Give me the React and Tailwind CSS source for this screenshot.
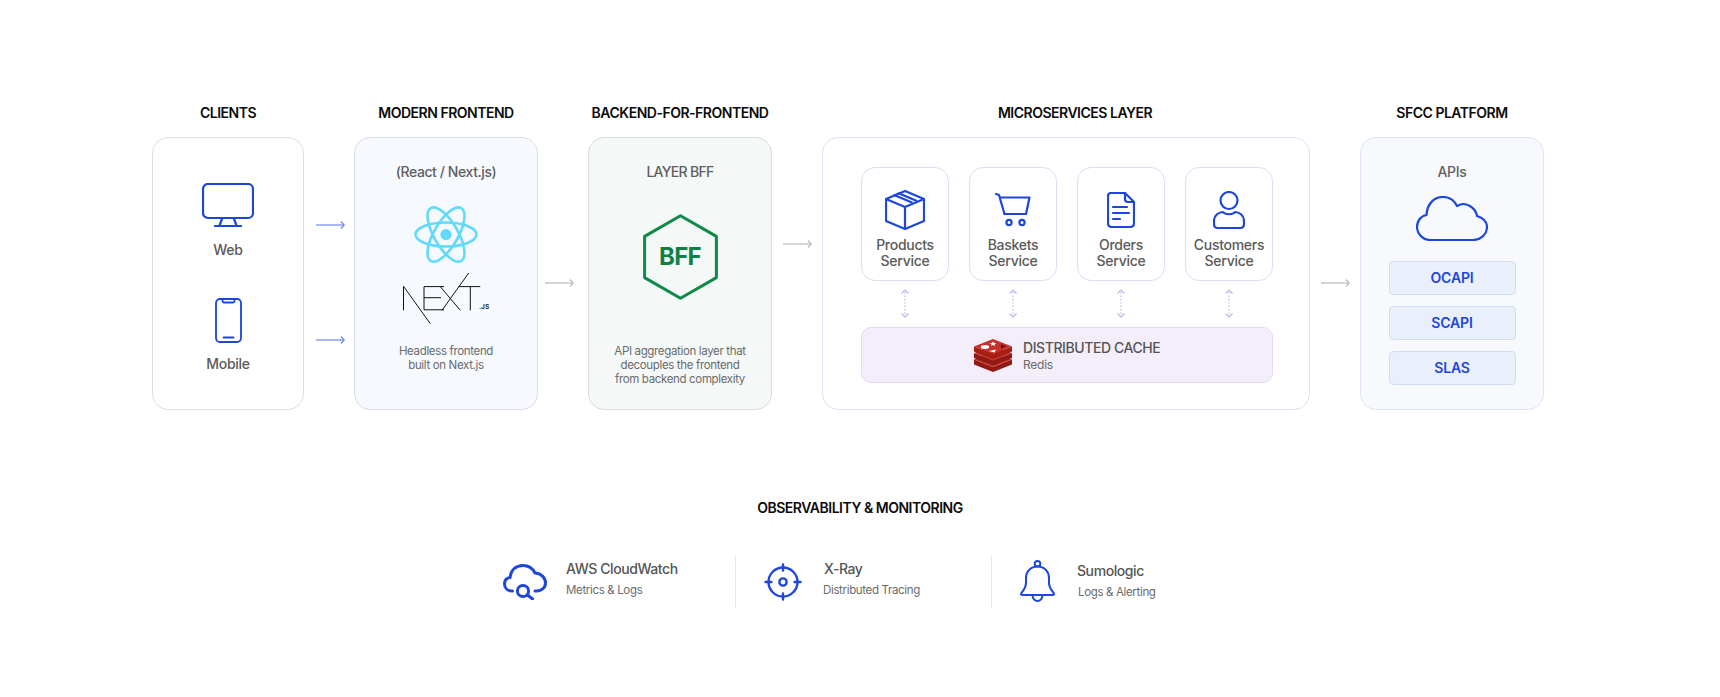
const BLUE = '#1d46dc';

const Arrow = ({ color = '#b9b9b9', w = 29 }) => (
  <svg width={w} height="10" viewBox={`0 0 ${w} 10`} fill="none" stroke={color} strokeWidth="1.2">
    <path d={`M0 5H${w - 1}`} />
    <path d={`M${w - 4} 1.5L${w - 0.8} 5L${w - 4} 8.5`} />
  </svg>
);

const DottedArrow = () => (
  <svg width="10" height="29" viewBox="0 0 10 29" fill="none" stroke="#c4aeea" strokeWidth="1.1">
    <path d="M1.5 4.5L5 1L8.5 4.5" />
    <path d="M5 3V26" strokeDasharray="1.6 1.8" />
    <path d="M1.5 24.5L5 28L8.5 24.5" />
  </svg>
);

const MonitorIcon = () => (
  <svg width="52" height="44" viewBox="0 0 52 44" fill="none" stroke={BLUE} strokeWidth="2.2" strokeLinecap="round">
    <rect x="1" y="1" width="50" height="34" rx="5" />
    <path d="M20 36L17.5 42.5M32 36L34.5 42.5M13 43H39" />
  </svg>
);

const MobileIcon = () => (
  <svg width="27" height="45" viewBox="0 0 27 45" fill="none" stroke={BLUE} strokeWidth="1.8" strokeLinecap="round">
    <rect x="1" y="1" width="25" height="43" rx="4" />
    <path d="M7.5 1V3Q7.5 4.5 9 4.5H18Q19.5 4.5 19.5 3V1" />
    <path d="M8.5 39.5H18.5" />
  </svg>
);

const ReactLogo = () => (
  <svg width="64" height="57" viewBox="-32 -28.5 64 57" fill="none" stroke="#61dafb" strokeWidth="2.6">
    <ellipse rx="30.5" ry="12" />
    <ellipse rx="30.5" ry="12" transform="rotate(60)" />
    <ellipse rx="30.5" ry="12" transform="rotate(120)" />
    <circle r="5.6" fill="#61dafb" stroke="none" />
  </svg>
);

const NextLogo = () => (
  <svg width="87" height="51" viewBox="0 0 87 51" fill="none" stroke="#111" strokeWidth="1">
    <path d="M0.5 37.3V13.3L27.3 50.7" />
    <path d="M21 36.8V13.6H41M21 24.7H38M21 36.8H41" />
    <path d="M37 13.3L57.3 37.3M65.7 0L39 37.3" />
    <path d="M55.7 13.6H77.3M67.3 13.6V37.3" />
    <text x="76" y="36" fontSize="6.6" fontWeight="600" fill="#111" stroke="none" fontFamily="Inter, sans-serif">.JS</text>
  </svg>
);

const Hexagon = () => (
  <svg width="75" height="86" viewBox="0 0 75 86" fill="none" stroke="#0f8a4b" strokeWidth="3" strokeLinejoin="round">
    <path d="M37.5 1.8L73.4 22.4V63.6L37.5 84.2L1.6 63.6V22.4Z" />
  </svg>
);

const BoxIcon = () => (
  <svg width="40" height="40" viewBox="0 0 40 40" fill="none" stroke={BLUE} strokeWidth="2.2" strokeLinejoin="round">
    <path d="M20 1L39 9V31L20 39L1 31V9Z" />
    <path d="M1 9L20 17L39 9M20 17V39" />
    <path d="M8.5 4.8L27.5 12.8M13 3L32 11" />
  </svg>
);

const CartIcon = () => (
  <svg width="36" height="34" viewBox="0 0 36 34" fill="none" stroke={BLUE} strokeWidth="2.2" strokeLinecap="round" strokeLinejoin="round">
    <path d="M1 1L4 2L9.5 21" />
    <path d="M5 4.5H34.5L31 21H9.5" />
    <circle cx="14" cy="29.5" r="2.6" />
    <circle cx="27" cy="29.5" r="2.6" />
  </svg>
);

const DocIcon = () => (
  <svg width="28" height="36" viewBox="0 0 28 36" fill="none" stroke={BLUE} strokeWidth="2.2" strokeLinecap="round" strokeLinejoin="round">
    <path d="M4 1H18L27 10V31Q27 35 23 35H5Q1 35 1 31V4Q1 1 4 1Z" />
    <path d="M18 1V7Q18 10 21 10H27" />
    <path d="M6 15H20M6 21H22M6 27H13" />
  </svg>
);

const UserIcon = () => (
  <svg width="32" height="38" viewBox="0 0 32 38" fill="none" stroke={BLUE} strokeWidth="2.2" strokeLinejoin="round">
    <circle cx="16" cy="9.5" r="8.5" />
    <path d="M10 21C6 21 1 24 1 30V33Q1 37 5 37H27Q31 37 31 33V30C31 24 26 21 22 21C20 24 12 24 10 21Z" />
  </svg>
);

const RedisLogo = () => {
  const layer = (o, top, side) => (
    <g key={o}>
      <path d={`M0 ${7.5 + o}L19 ${15 + o}L38 ${7.5 + o}V${12.5 + o}L19 ${20 + o}L0 ${12.5 + o}Z`} fill={side} />
      <path d={`M19 ${o}L38 ${7.5 + o}L19 ${15 + o}L0 ${7.5 + o}Z`} fill={top} />
    </g>
  );
  return (
    <svg width="38" height="33" viewBox="0 0 38 33">
      {layer(13, '#c6302b', '#8e1a13')}
      {layer(6.5, '#c6302b', '#8e1a13')}
      {layer(0, '#c6302b', '#a41e11')}
      <path d="M19 2.5L20 4L22.5 4.5L20.5 5.5L21 7L19 6L17 6.8L17.5 5.3L15.5 4.5L18 4Z" fill="#fff" />
      <ellipse cx="11" cy="8" rx="4.2" ry="1.9" fill="#fff" />
      <path d="M15 12L22 10.5L20.5 13.5Z" fill="#fff" />
      <path d="M27 5.2L32 7.5L27 9.5Z" fill="#5e1410" />
    </svg>
  );
};

const CloudIcon = () => (
  <svg width="72" height="45" viewBox="0 0 72 45" fill="none" stroke={BLUE} strokeWidth="2.2" strokeLinejoin="round">
    <path d="M14 44H57C65 44 71 38 71 31C71 26 67 22 61 20C60 13 53 8 47 8C45 8 43 9 41 10C38 4 33 1 27 1C18 1 11 8 10.5 19C4 20 1 26 1 31C1 38 7 44 14 44Z" />
  </svg>
);

const CloudSearchIcon = () => (
  <svg width="44" height="36" viewBox="0 0 44 36" fill="none" stroke={BLUE} strokeWidth="3" strokeLinecap="round">
    <path d="M9.5 27H9C4.5 27 1.5 24 1.5 20C1.5 16 4 14 7 13.5C8 6 13 1.5 20 1.5C26 1.5 30 5 32 9C38 9 42.5 14 42.5 19C42.5 24 38 27 34 27H32" />
    <circle cx="20" cy="27" r="5.6" />
    <path d="M24.5 31L29.5 35" />
  </svg>
);

const TargetIcon = () => (
  <svg width="38" height="38" viewBox="0 0 38 38" fill="none" stroke={BLUE} strokeWidth="2.4" strokeLinecap="round">
    <circle cx="19" cy="19" r="14.5" />
    <circle cx="19" cy="19" r="3.6" />
    <path d="M19 1.5V7.5M19 30.5V36.5M1.5 19H7.5M30.5 19H36.5" />
  </svg>
);

const BellIcon = () => (
  <svg width="35" height="42" viewBox="0 0 35 42" fill="none" stroke={BLUE} strokeWidth="2" strokeLinejoin="round" className="mb-[3px]">
    <circle cx="17.5" cy="3.8" r="2.8" />
    <path d="M17.5 6.6C10.5 6.6 6 11.5 6 18V23C6 28 3 30.5 1.3 33.2Q0.4 35 2.5 35H32.5Q34.6 35 33.7 33.2C32 30.5 29 28 29 23V18C29 11.5 24.5 6.6 17.5 6.6Z" />
    <path d="M12.5 35C12.5 38.5 14.8 41 17.5 41C20.2 41 22.5 38.5 22.5 35" />
  </svg>
);

const Column = ({ title, width, headingClass = '', children }) => (
  <div className={`shrink-0 ${width}`}>
    <h2 className={`h-5 mb-[14px] text-center text-[14px] leading-5 font-semibold tracking-[-0.035em] text-[#0b0b0b] whitespace-nowrap ${headingClass}`}>
      {title}
    </h2>
    {children}
  </div>
);

// the 50px strip between two columns, arrows sit at their own heights
const Gap = ({ children, className }) => (
  <div className={`w-[50px] shrink-0 flex flex-col items-center ${className}`}>{children}</div>
);

const services = [
  { name: 'Products', icon: <BoxIcon />, top: 'pt-[22px]' },
  { name: 'Baskets', icon: <CartIcon />, top: 'pt-[25px]' },
  { name: 'Orders', icon: <DocIcon />, top: 'pt-[24px]' },
  { name: 'Customers', icon: <UserIcon />, top: 'pt-[23px]' }
];

const ServiceCard = ({ service }) => (
  <div className="w-[88px] h-[114px] shrink-0 rounded-[14px] border border-[#e4daf6] bg-white flex flex-col items-center">
    <div className={`h-[69px] ${service.top}`}>{service.icon}</div>
    <p className="text-[14px] leading-4 font-medium tracking-[-0.02em] text-[#5a5a5a] text-center">
      {service.name}
      <br />
      Service
    </p>
  </div>
);

const monitors = [
  { name: 'AWS CloudWatch', sub: 'Metrics & Logs', icon: <CloudSearchIcon />, box: 'w-[235px] pl-[3px] gap-[19px]', nameClass: '', subClass: '', textPad: 'pb-[6px]' },
  { name: 'X-Ray', sub: 'Distributed Tracing', icon: <TargetIcon />, box: 'w-[256px] pl-[28px] gap-[21px]', nameClass: 'pl-px', subClass: '', textPad: 'pb-[6px]' },
  { name: 'Sumologic', sub: 'Logs & Alerting', icon: <BellIcon />, box: 'w-[200px] pl-[28px] gap-[22px]', nameClass: '', subClass: 'pl-px', textPad: 'pb-[2px]' }
];

export default function App() {
  return (
    <div className="min-h-[697px] bg-white font-['Inter',sans-serif]">
      <div className="pt-[103px] pl-[152px] flex items-start">
        <Column title="CLIENTS" width="w-[152px]">
          <div className="h-[273px] rounded-[16px] border border-[#dfdfe2] bg-white flex flex-col items-center pt-[45px]">
            <MonitorIcon />
            <p className="mt-[13px] text-[14px] leading-5 font-medium tracking-[-0.02em] text-[#5a5a5a]">Web</p>
            <div className="mt-[38px]"><MobileIcon /></div>
            <p className="mt-[11px] text-[14px] leading-5 font-medium tracking-[-0.02em] text-[#5a5a5a]">Mobile</p>
          </div>
        </Column>

        <Gap className="pt-[117px] pl-[2px]">
          <Arrow color="#6f88ee" />
          <div className="mt-[105px]"><Arrow color="#6f88ee" /></div>
        </Gap>

        <Column title="MODERN FRONTEND" width="w-[184px]">
          <div className="h-[273px] rounded-[16px] border border-[#d8dde6] bg-[#f6f9fe] flex flex-col items-center pt-[24px]">
            <p className="text-[14px] leading-5 font-medium tracking-[-0.03em] text-[#5f5f5f]">(React / Next.js)</p>
            <div className="mt-[24px]"><ReactLogo /></div>
            <div className="mt-[10px] ml-px"><NextLogo /></div>
            <p className="mt-[20px] text-[11.5px] leading-[14px] tracking-[-0.03em] text-[#6b6b6b] text-center">
              Headless frontend
              <br />
              built on Next.js
            </p>
          </div>
        </Column>

        <Gap className="pt-[175px] pr-[7px]">
          <Arrow />
        </Gap>

        <Column title="BACKEND-FOR-FRONTEND" width="w-[184px]">
          <div className="h-[273px] rounded-[16px] border border-[#d8dedb] bg-[#f4f8f6] flex flex-col items-center pt-[24px]">
            <p className="text-[14px] leading-5 font-medium tracking-[-0.05em] text-[#5f5f5f]">LAYER BFF</p>
            <div className="mt-[32px] relative">
              <Hexagon />
              <span className="absolute inset-0 flex items-center justify-center text-[24px] font-bold tracking-[-0.03em] text-[#0e8145]">BFF</span>
            </div>
            <p className="mt-[44px] text-[11.5px] leading-[14px] tracking-[-0.03em] text-[#6b6b6b] text-center">
              API aggregation layer that
              <br />
              decouples the frontend
              <br />
              from backend complexity
            </p>
          </div>
        </Column>

        <Gap className="pt-[136px]">
          <Arrow />
        </Gap>

        <Column title="MICROSERVICES LAYER" width="w-[488px]" headingClass="pl-[18px]">
          <div className="h-[273px] rounded-[16px] border border-[#e5dcf6] bg-white pt-[29px] pl-[38px] pr-[36px]">
            <div className="flex gap-[20px]">
              {services.map((service) => (
                <ServiceCard key={service.name} service={service} />
              ))}
            </div>
            <div className="flex gap-[20px] h-[46px] pt-[8px]">
              {services.map((service) => (
                <div key={service.name} className="w-[88px] flex justify-center"><DottedArrow /></div>
              ))}
            </div>
            <div className="h-[56px] rounded-[10px] border border-[#e4daf6] bg-[#f3eefa] flex items-center pl-[112px] gap-[11px]">
              <RedisLogo />
              <div>
                <p className="text-[14px] leading-[18px] font-medium tracking-[-0.03em] text-[#555]">DISTRIBUTED CACHE</p>
                <p className="text-[12px] leading-[15px] tracking-[-0.02em] text-[#6b6b6b]">Redis</p>
              </div>
            </div>
          </div>
        </Column>

        <Gap className="pt-[175px]">
          <Arrow />
        </Gap>

        <Column title="SFCC PLATFORM" width="w-[184px]">
          <div className="h-[273px] rounded-[16px] border border-[#dbe4f8] bg-[#f8f9fd] flex flex-col items-center pt-[24px]">
            <p className="text-[14px] leading-5 font-medium tracking-[-0.02em] text-[#5f5f5f]">APIs</p>
            <div className="mt-[14px]"><CloudIcon /></div>
            <div className="mt-[20px] flex flex-col gap-[11px]">
              {['OCAPI', 'SCAPI', 'SLAS'].map((api) => (
                <div key={api} className="w-[127px] h-[34px] pb-[2px] rounded-[4px] border border-[#d2def6] bg-[#eaf0fb] flex items-center justify-center text-[14px] font-semibold tracking-[-0.01em] text-[#1d46dc]">
                  {api}
                </div>
              ))}
            </div>
          </div>
        </Column>
      </div>

      <h2 className="mt-[88px] h-5 text-center text-[14px] leading-5 font-semibold tracking-[-0.035em] text-[#0b0b0b]">
        OBSERVABILITY &amp; MONITORING
      </h2>

      <div className="mt-[38px] pl-[500px] flex items-center">
        {monitors.map((item, index) => (
          <div key={item.name} className={`h-[52px] flex items-center ${item.box} ${index > 0 ? 'border-l border-[#e6e6e6]' : ''}`}>
            {item.icon}
            <div className={item.textPad}>
              <p className={`text-[14px] leading-5 font-medium tracking-[-0.03em] text-[#555] ${item.nameClass}`}>{item.name}</p>
              <p className={`mt-px text-[11.5px] leading-5 tracking-[-0.03em] text-[#6b6b6b] ${item.subClass}`}>{item.sub}</p>
            </div>
          </div>
        ))}
      </div>
    </div>
  );
}
